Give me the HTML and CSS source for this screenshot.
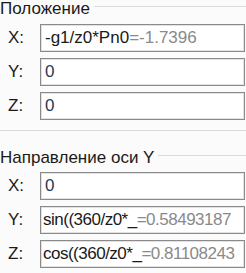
FILE: index.html
```html
<!DOCTYPE html>
<html>
<head>
<meta charset="utf-8">
<link rel="stylesheet" href="styles.css">
</head>
<body>
<div class="panel">
  <section class="group first">
    <div class="group-head"><span class="group-title">Положение</span><span class="group-line"></span></div>
    <div class="rows">
      <div class="row"><span class="lbl">X:</span><div class="field"><span class="expr">-g1/z0*Pn0</span><span class="res">=-1.7396</span></div></div>
      <div class="row"><span class="lbl">Y:</span><div class="field"><span class="num">0</span></div></div>
      <div class="row"><span class="lbl">Z:</span><div class="field"><span class="num">0</span></div></div>
    </div>
  </section>
  <section class="group second">
    <div class="group-head"><span class="group-title">Направление оси Y</span><span class="group-line"></span></div>
    <div class="rows">
      <div class="row"><span class="lbl">X:</span><div class="field"><span class="num">0</span></div></div>
      <div class="row"><span class="lbl">Y:</span><div class="field tight"><span class="expr">sin((360/z0*_</span><span class="res">=0.58493187</span></div></div>
      <div class="row"><span class="lbl">Z:</span><div class="field tight"><span class="expr">cos((360/z0*_</span><span class="res">=0.81108243</span></div></div>
    </div>
  </section>
</div>
</body>
</html>
```
FILE: styles.css
```css
html, body {
  margin: 0;
  padding: 0;
}
body {
  background: #fbfbfb;
  font-family: "Liberation Sans", Arial, sans-serif;
  font-size: 17px;
  color: #1a1a1a;
  width: 246px;
  height: 273px;
  overflow: hidden;
}
.panel {
  display: flex;
  flex-direction: column;
}
.group.first {
  border-bottom: 1px solid #dadada;
  padding-bottom: 10px;
}
.group.second {
  margin-top: 18px;
}
.group-head {
  display: flex;
  height: 17px;
  line-height: 17px;
}
.group-title {
  white-space: nowrap;
  padding-right: 4px;
}
.group-line {
  flex: 1;
  margin-top: 6px;
  height: 0;
  border-top: 1px solid #dadada;
}
.first .rows {
  margin-top: 7px;
}
.second .rows {
  margin-top: 6px;
}
.rows {
  display: flex;
  flex-direction: column;
  gap: 6px;
}
.row {
  display: flex;
  align-items: center;
  height: 28px;
}
.lbl {
  width: 32px;
  padding-left: 8px;
}
.field {
  width: 199px;
  height: 26px;
  border: 1px solid #8a8a8a;
  box-shadow: inset 0 0 0 1px #e2e2e2;
  background: #ffffff;
  padding-left: 4px;
  display: flex;
  align-items: center;
  white-space: nowrap;
  overflow: hidden;
}
.field.tight {
  padding-left: 2px;
  width: 201px;
  letter-spacing: -0.5px;
}
.expr {
  color: #1a1a1a;
}
.res {
  color: #8a8a8a;
}
.num {
  color: #2a3a58;
}
```
